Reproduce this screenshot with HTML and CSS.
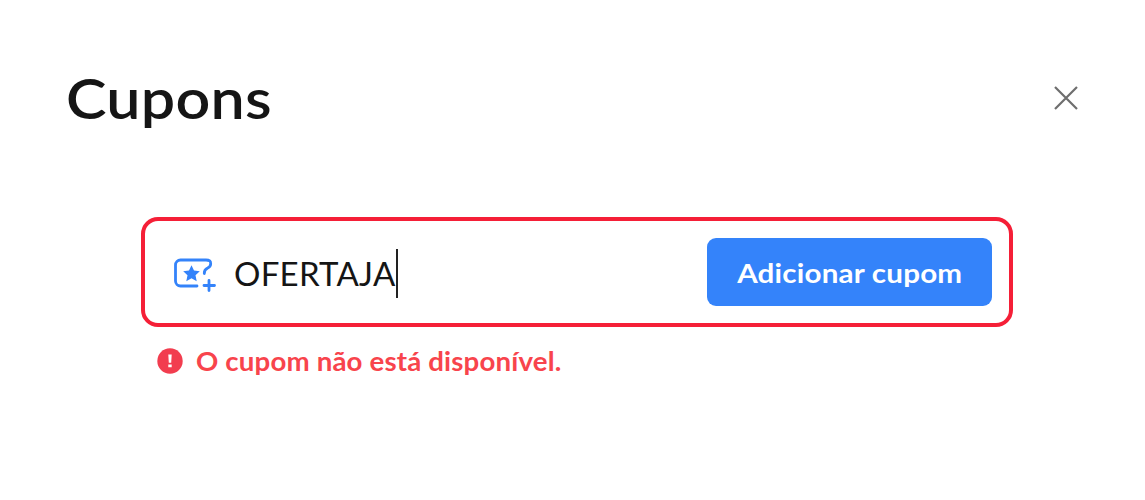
FILE: index.html
```
<!DOCTYPE html>
<html lang="pt-BR">
<head>
  <meta charset="UTF-8" />
  <meta name="viewport" content="width=device-width, initial-scale=1.0"/>
  <title>Cupons</title>
  <link rel="stylesheet" href="styles.css">
</head>
<body>
  <div class="modal">
    <header class="modal-header">
      <h2>Cupons</h2>
      <button type="button" class="close" aria-label="Fechar">
        <svg width="26" height="26" viewBox="0 0 26 26">
          <path d="M2 2l22 22M24 2L2 24" />
        </svg>
      </button>
    </header>

    <form class="coupon-form">
      <div class="coupon-field">
        <svg class="coupon-icon" width="44" height="36" viewBox="0 0 44 36">
          <path class="ticket" d="M23 30H6.500a5 5 0 0 1-5-5V9a5 5 0 0 1 5-5H32c4 0 4.700 1 4.700 3.700 0 2.500-.8 3.200-3 4.300-2.600 1.300-3.600 2.800-3.400 5.500" />
          <path class="star" d="M17.500 9.300l2.500 5.300 5.800.7-4.300 4 1.200 6-5.200-3-5.200 3 1.200-6-4.300-4 5.800-.7z" />
          <path class="plus" d="M35 24.500v10M30 29.500h10.500" />
        </svg>
        <div class="coupon-input"><span class="coupon-code">OFERTAJA</span><span class="caret"></span></div>
        <button type="submit" class="add-button"><span>Adicionar cupom</span></button>
      </div>

      <div class="error">
        <svg width="26" height="26" viewBox="0 0 26 26">
          <circle cx="13" cy="13" r="12.700" />
          <path d="M11.300 6.500h3.400l-.5 8.300h-2.400zM11.300 16.500h3.400v2.800h-3.400z" />
        </svg>
        <span class="error-text">O cupom não está disponível.</span>
      </div>
    </form>
  </div>
</body>
</html>
```

FILE: styles.css
```
* {
  box-sizing: border-box;
}

body {
  margin: 0;
  background: #fff;
  font-family: Lato, "Open Sans", sans-serif;
  color: #151515;
}

.modal {
  height: 500px;
  padding: 64px 66px 0;
}

.modal-header {
  display: flex;
  justify-content: space-between;
  align-items: center;
  height: 68px;
}

h2 {
  margin: 0;
  font-size: 56px;
  font-weight: 600;
  line-height: 68px;
  letter-spacing: 0.2px;
  transform: scaleX(1.09);
  transform-origin: left;
}

button {
  border: none;
  font-family: inherit;
  cursor: pointer;
}

.close {
  display: flex;
  padding: 0;
  background: none;
}

.close svg {
  fill: none;
  stroke: #6e6e6e;
  stroke-width: 2.2;
}

.coupon-form {
  margin: 85px 66px 0 75px;
}

.coupon-field {
  display: flex;
  align-items: center;
  height: 110px;
  padding: 0 17px 0 29px;
  border: 4px solid #f51f37;
  border-radius: 17px;
}

.coupon-icon {
  flex: none;
  margin-top: 4px;
  fill: none;
  stroke: #3483fa;
  stroke-width: 2.8;
  stroke-linecap: round;
}

.coupon-icon .star {
  fill: #3483fa;
  stroke: none;
}

.coupon-input {
  display: flex;
  flex: 1;
  align-items: center;
  margin-left: 16px;
}

.coupon-code {
  padding-top: 2px;
  font-size: 33px;
  letter-spacing: 0.25px;
}

.caret {
  width: 2px;
  height: 49px;
  margin-top: 2px;
  background: #222;
}

.add-button {
  width: 285px;
  height: 68px;
  padding: 0;
  border-radius: 9px;
  background: #3483fa;
  color: #fff;
  font-size: 27.5px;
  font-weight: bold;
}

.add-button span {
  display: inline-block;
  letter-spacing: 0.2px;
  transform: scaleX(1.075);
}

.error {
  display: flex;
  align-items: center;
  height: 36px;
  margin-top: 16px;
  padding-left: 16px;
  color: #f8444c;
  font-size: 26px;
  font-weight: bold;
}

.error svg {
  margin-right: 13px;
  fill: #f23d4f;
}

.error svg path {
  fill: #fff;
}

.error-text {
  letter-spacing: 0.15px;
  transform: scaleX(1.063);
  transform-origin: left;
}
```
